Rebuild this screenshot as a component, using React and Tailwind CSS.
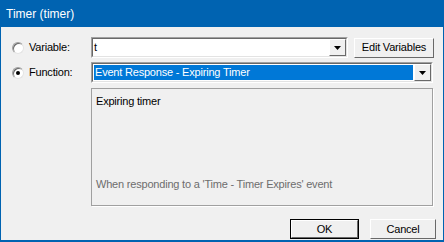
import React from "react";

const font = { fontFamily: '"Liberation Sans", Arial, sans-serif' };

const Arrow = () => (
  <svg width="7" height="4" viewBox="0 0 7 4" className="block">
    <path d="M0 0H7L3.5 4Z" fill="#000" />
  </svg>
);

const DropButton = () => (
  <div className="w-[17px] h-full bg-[#f0f0f0] border border-t-white border-l-white border-b-[#696969] border-r-[#696969] flex items-center justify-center">
    <Arrow />
  </div>
);

const Radio = ({ checked }) => (
  <div className="w-[12px] h-[12px] rounded-full border border-t-[#a0a0a0] border-l-[#a0a0a0] border-b-[#e3e3e3] border-r-[#e3e3e3] bg-white flex items-center justify-center shadow-[inset_1px_1px_0_#696969]">
    {checked && <div className="w-[4px] h-[4px] rounded-full bg-black" />}
  </div>
);

const Sunken = ({ className, children }) => (
  <div
    className={`border border-t-[#a0a0a0] border-l-[#a0a0a0] border-b-white border-r-white ${className}`}
  >
    <div className="w-full h-full border border-t-[#696969] border-l-[#696969] border-b-[#e3e3e3] border-r-[#e3e3e3]">
      {children}
    </div>
  </div>
);

const Button = ({ label, width, isDefault }) => (
  <div
    className={`h-[20px] ${width} ${
      isDefault ? "border border-[#000]" : ""
    } bg-[#f0f0f0]`}
  >
    <div className="w-full h-full border border-t-white border-l-white border-b-[#696969] border-r-[#696969] flex items-center justify-center text-[11px] tracking-[-0.2px] text-black">
      {label}
    </div>
  </div>
);

export default function App() {
  return (
    <div
      className="w-[444px] h-[242px] bg-[#f0f0f0] border-x border-b-2 border-[#0063b1] flex flex-col"
      style={font}
    >
      <div className="h-[27px] bg-[#0063b1] text-white text-[12px] flex items-center pl-[6px] -mx-px shrink-0">
        Timer (timer)
      </div>

      <div className="pt-[10px] flex flex-col text-[11px] tracking-[-0.2px] text-black">
        <div className="flex items-center h-[21px]">
          <div className="w-[90px] flex items-center pl-[11px]">
            <Radio />
            <span className="ml-[5px]">Variable:</span>
          </div>
          <Sunken className="w-[257px] h-[21px]">
            <div className="flex h-full bg-white">
              <span className="flex-1 pl-[1px] leading-[17px]">t</span>
              <DropButton />
            </div>
          </Sunken>
          <div className="ml-[6px]">
            <Button label="Edit Variables" width="w-[80px]" />
          </div>
        </div>

        <div className="flex items-center h-[21px] mt-[4px]">
          <div className="w-[90px] flex items-center pl-[11px]">
            <Radio checked />
            <span className="ml-[5px]">Function:</span>
          </div>
          <Sunken className="w-[342px] h-[21px]">
            <div className="flex h-full bg-white">
              <div className="flex-1 p-[1px]">
                <div className="h-full bg-[#0078d7] text-white pl-[1px] leading-[15px]">
                  Event Response - Expiring Timer
                </div>
              </div>
              <DropButton />
            </div>
          </Sunken>
        </div>

        <div className="flex mt-[5px]">
          <div className="w-[90px]" />
          <div className="w-[342px] h-[118px] border border-[#a0a0a0] shadow-[1px_1px_0_#fff] flex flex-col justify-between px-[4px] pt-[4px] pb-[13px]">
            <span>Expiring timer</span>
            <span className="text-[#6d6d6d]">
              When responding to a 'Time - Timer Expires' event
            </span>
          </div>
        </div>

        <div className="flex justify-end mt-[13px] pr-[7px] gap-[11px]">
          <Button label="OK" width="w-[69px]" isDefault />
          <Button label="Cancel" width="w-[66px]" />
        </div>
      </div>
    </div>
  );
}
